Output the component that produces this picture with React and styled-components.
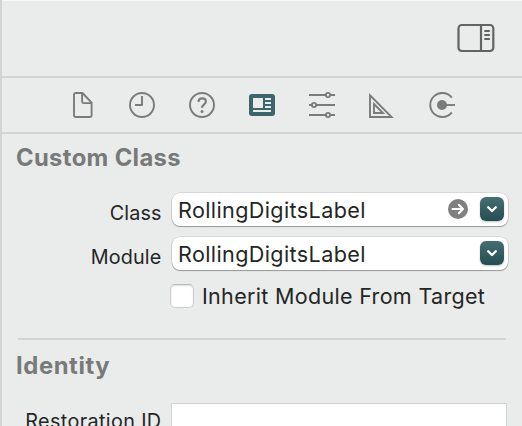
import React from "react";
import styled, { createGlobalStyle } from "styled-components";

const GlobalStyle = createGlobalStyle`
  *, *::before, *::after { box-sizing: border-box; }
  html, body { margin: 0; height: 100%; overflow: hidden; background: #eaeceb; }
  body { font-family: Inter, "Liberation Sans", sans-serif; color: #242625; }
`;

const Inspector = styled.main`
  display: flex;
  flex-direction: column;
  width: 522px;
  height: 426px;
  overflow: hidden;
  border-left: 2px solid #d3d5d4;
  background: #eaeceb;
`;

const Toolbar = styled.header`
  display: flex;
  flex: none;
  justify-content: flex-end;
  align-items: flex-start;
  height: 78px;
  padding: 23px 27px 0 0;
  border-bottom: 2px solid #d3d5d4;
  box-shadow: inset 0 1px #f5f6f6;
`;

const TabBar = styled.nav`
  display: flex;
  flex: none;
  align-items: center;
  gap: 30px;
  height: 56px;
  padding-left: 65px;
  border-bottom: 2px solid #d3d5d4;
`;

const TabIcon = styled.svg`
  display: block;
  flex: none;
  width: 30px;
  height: 30px;
  fill: none;
  stroke: ${(p) => (p.$active ? "none" : "#7a7c7b")};
  stroke-width: 1.9;
  stroke-linecap: butt;
  stroke-linejoin: round;
`;

const Section = styled.section`
  flex: none;
  height: ${(p) => p.$height}px;
  padding-top: ${(p) => p.$top}px;
`;

const Heading = styled.h2`
  margin: 0 0 0 14px;
  height: 30px;
  font-size: 23.8px;
  font-weight: 700;
  line-height: 30px;
  letter-spacing: ${(p) => p.$tracking}px;
  color: #787a79;
  white-space: nowrap;
`;

const Row = styled.div`
  display: grid;
  grid-template-columns: 159px 337px;
  column-gap: 10px;
  height: 34px;
  margin-top: ${(p) => p.$gap}px;
`;

const Label = styled.label`
  height: 34px;
  padding-top: ${(p) => p.$drop ?? 3}px;
  font-size: 19.8px;
  line-height: 34px;
  letter-spacing: ${(p) => p.$tracking}px;
  margin-right: -0.5px;
  text-align: right;
  white-space: nowrap;
`;

const Combo = styled.div`
  display: flex;
  align-items: center;
  height: 33px;
  margin-left: 1px;
  padding: 0 4px 0 6px;
  border-radius: 8px;
  background: #fff;
  box-shadow: 0 0 0 0.6px rgba(0, 0, 0, 0.16), 0 1px 1px rgba(0, 0, 0, 0.3);
`;

const Value = styled.span`
  flex: 1;
  font-size: 21.6px;
  line-height: 33px;
  padding-top: 1px;
  letter-spacing: 0.37px;
  white-space: nowrap;
`;

const JumpIcon = styled.svg`
  display: block;
  width: 20px;
  height: 20px;
  margin: 0 12px 1px 0;
`;

const Dropdown = styled.span`
  display: flex;
  width: 24px;
  height: 24px;
  margin-bottom: 1px;
  border-radius: 6px;
  background: linear-gradient(#466f73, #254d53);
  box-shadow: 0 1px 2px rgba(30, 75, 80, 0.3);
`;

const CheckRow = styled.label`
  display: flex;
  align-items: center;
  gap: 8px;
  height: 24px;
  margin: 13px 0 0 168px;
`;

const CheckBox = styled.span`
  width: 24px;
  height: 24px;
  border: 1px solid #cccecd;
  border-top-color: #b9bbba;
  border-radius: 5px;
  background: #fff;
  box-shadow: inset 0 1px 2px rgba(0, 0, 0, 0.13);
`;

const CheckText = styled.span`
  font-size: 21.5px;
  line-height: 24px;
  letter-spacing: 0.32px;
  white-space: nowrap;
`;

const Divider = styled.hr`
  flex: none;
  width: 488px;
  height: 2px;
  margin: 0 0 0 16px;
  border: 0;
  background: #d3d5d4;
`;

const TextBox = styled.div`
  width: 336px;
  height: 38px;
  border: 1px solid #d3d5d4;
  background: #fff;
`;

function SidebarIcon() {
  return (
    <svg width="39" height="30" viewBox="0 0 39 30" fill="none" stroke="#626463" strokeWidth="2.2">
      <rect x="2.5" y="2" width="34.8" height="26" rx="3.2" />
      <path d="M25 2v26" />
      <path d="M29.1 8h4M29.1 12h4M29.1 16h4" strokeWidth="2.1" strokeLinecap="round" />
    </svg>
  );
}

function Chevron() {
  return (
    <svg width="24" height="24" viewBox="0 0 24 24" fill="none" stroke="#fff" strokeWidth="2.3" strokeLinecap="round" strokeLinejoin="round">
      <path d="M8.2 10.3 12 14l3.8-3.7" />
    </svg>
  );
}

function Tabs() {
  return (
    <TabBar>
      <TabIcon viewBox="0 0 30 30">
        <path d="M8.9 3h6.6l9.1 9.6v12.6a1.8 1.8 0 0 1-1.8 1.8H8.8A1.8 1.8 0 0 1 7 25.2V4.8A1.8 1.8 0 0 1 8.9 3Z" />
        <path d="M15.1 3.2v8.4q0 1.5 1.5 1.5h7.8" />
      </TabIcon>
      <TabIcon viewBox="0 0 30 30">
        <circle cx="15" cy="15" r="12" />
        <path d="M15 6v9H8" />
      </TabIcon>
      <TabIcon viewBox="0 0 30 30">
        <circle cx="15" cy="15" r="12" />
        <path d="M11.5 12c0-2.2 1.4-3.6 3.6-3.6s3.8 1.3 3.8 3.2c0 2.9-3.8 2.8-3.8 6.2" strokeWidth="2.1" />
        <circle cx="15" cy="21.4" r="1.5" fill="#7a7c7b" stroke="none" />
      </TabIcon>
      <TabIcon viewBox="0 0 30 30" $active>
        <rect x="2" y="4" width="26" height="22" rx="3" fill="#3d666b" />
        <path d="M6 8h10v10H6zM18 8h6v2h-6zM18 12h6v2h-6zM18 16h6v2h-6zM6 20h18v2H6z" fill="#eaeceb" />
      </TabIcon>
      <TabIcon viewBox="0 0 30 30">
        <path d="M2 5h16.5M23.5 5H28M2 15h2.5M9.5 15H28M2 25h16.5M23.5 25H28" />
        <circle cx="21" cy="5" r="2.1" />
        <circle cx="7" cy="15" r="2.1" />
        <circle cx="21" cy="25" r="2.1" />
      </TabIcon>
      <TabIcon viewBox="0 0 30 30">
        <path d="M3 5.4v21.6h21.6Z" strokeLinejoin="miter" />
        <path d="M7 14v9h9Z" strokeLinejoin="miter" />
      </TabIcon>
      <TabIcon viewBox="0 0 30 30">
        <path d="M24.8 7.7A12 12 0 1 0 24.8 22.3" />
        <circle cx="15" cy="15" r="5" fill="#7a7c7b" stroke="none" />
        <path d="M18 15h10" />
      </TabIcon>
    </TabBar>
  );
}

function ComboField({ label, value, jump, gap, tracking }) {
  return (
    <Row $gap={gap}>
      <Label $tracking={tracking}>{label}</Label>
      <Combo>
        <Value>{value}</Value>
        {jump && (
          <JumpIcon viewBox="0 0 20 20">
            <circle cx="10" cy="10" r="10" fill="#808080" />
            <path d="M4.5 10h10M10.8 5.8l4.2 4.2-4.2 4.2" fill="none" stroke="#fff" strokeWidth="2" strokeLinecap="round" strokeLinejoin="round" />
          </JumpIcon>
        )}
        <Dropdown><Chevron /></Dropdown>
      </Combo>
    </Row>
  );
}

export default function App() {
  return (
    <>
      <GlobalStyle />
      <Inspector>
        <Toolbar><SidebarIcon /></Toolbar>
        <Tabs />
        <Section $height={204} $top={9}>
          <Heading $tracking={0.35}>Custom Class</Heading>
          <ComboField label="Class" value="RollingDigitsLabel" jump gap={20} tracking={0.1} />
          <ComboField label="Module" value="RollingDigitsLabel" gap={10} tracking={0.15} />
          <CheckRow>
            <CheckBox />
            <CheckText>Inherit Module From Target</CheckText>
          </CheckRow>
        </Section>
        <Divider />
        <Section $height={86} $top={11}>
          <Heading $tracking={0.6}>Identity</Heading>
          <Row $gap={22}>
            <Label $tracking={0.37} $drop={1}>Restoration ID</Label>
            <TextBox />
          </Row>
        </Section>
      </Inspector>
    </>
  );
}
